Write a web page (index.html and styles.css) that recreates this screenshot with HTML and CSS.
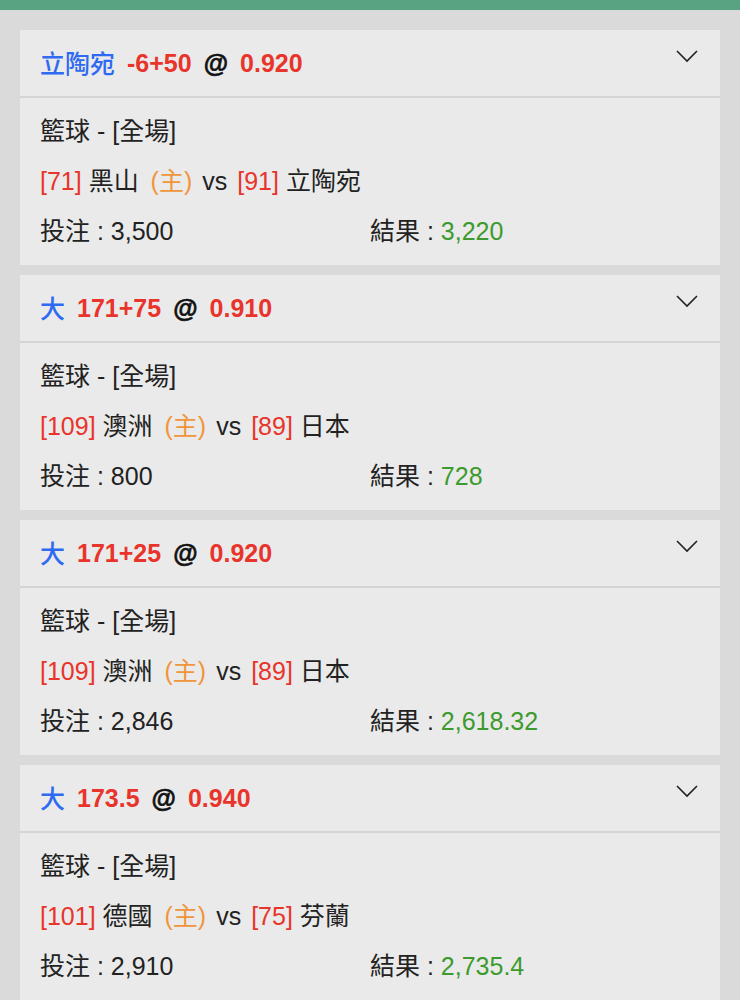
FILE: index.html
```html
<!DOCTYPE html>
<html lang="zh-Hant">
<head>
    <meta charset="UTF-8">
    <meta name="viewport" content="width=device-width, initial-scale=1.0">
    <title>投注紀錄</title>
    <link rel="stylesheet" href="styles.css">
</head>
<body>

<div class="top-bar"></div>

<div class="bet-list">

    <div class="bet-card">
        <div class="bet-head">
            <div class="bet-title">
                <span class="pick">立陶宛</span>
                <span class="line">-6+50</span>
                <span class="at">@</span>
                <span class="odds">0.920</span>
            </div>
            <svg class="chevron" width="24" height="14" viewBox="0 0 24 14"><polyline points="2,2 12,12 22,2" fill="none" stroke="#222" stroke-width="1.6"/></svg>
        </div>
        <div class="bet-body">
            <div class="row">籃球 - [全場]</div>
            <div class="row"><span class="num">[71]</span> 黑山 <span class="home">(主)</span><span class="vs">vs</span><span class="num">[91]</span> 立陶宛</div>
            <div class="row split">
                <div>投注 : 3,500</div>
                <div>結果 : <span class="win">3,220</span></div>
            </div>
        </div>
    </div>

    <div class="bet-card">
        <div class="bet-head">
            <div class="bet-title">
                <span class="pick">大</span>
                <span class="line">171+75</span>
                <span class="at">@</span>
                <span class="odds">0.910</span>
            </div>
            <svg class="chevron" width="24" height="14" viewBox="0 0 24 14"><polyline points="2,2 12,12 22,2" fill="none" stroke="#222" stroke-width="1.6"/></svg>
        </div>
        <div class="bet-body">
            <div class="row">籃球 - [全場]</div>
            <div class="row"><span class="num">[109]</span> 澳洲 <span class="home">(主)</span><span class="vs">vs</span><span class="num">[89]</span> 日本</div>
            <div class="row split">
                <div>投注 : 800</div>
                <div>結果 : <span class="win">728</span></div>
            </div>
        </div>
    </div>

    <div class="bet-card">
        <div class="bet-head">
            <div class="bet-title">
                <span class="pick">大</span>
                <span class="line">171+25</span>
                <span class="at">@</span>
                <span class="odds">0.920</span>
            </div>
            <svg class="chevron" width="24" height="14" viewBox="0 0 24 14"><polyline points="2,2 12,12 22,2" fill="none" stroke="#222" stroke-width="1.6"/></svg>
        </div>
        <div class="bet-body">
            <div class="row">籃球 - [全場]</div>
            <div class="row"><span class="num">[109]</span> 澳洲 <span class="home">(主)</span><span class="vs">vs</span><span class="num">[89]</span> 日本</div>
            <div class="row split">
                <div>投注 : 2,846</div>
                <div>結果 : <span class="win">2,618.32</span></div>
            </div>
        </div>
    </div>

    <div class="bet-card">
        <div class="bet-head">
            <div class="bet-title">
                <span class="pick">大</span>
                <span class="line">173.5</span>
                <span class="at">@</span>
                <span class="odds">0.940</span>
            </div>
            <svg class="chevron" width="24" height="14" viewBox="0 0 24 14"><polyline points="2,2 12,12 22,2" fill="none" stroke="#222" stroke-width="1.6"/></svg>
        </div>
        <div class="bet-body">
            <div class="row">籃球 - [全場]</div>
            <div class="row"><span class="num">[101]</span> 德國 <span class="home">(主)</span><span class="vs">vs</span><span class="num">[75]</span> 芬蘭</div>
            <div class="row split">
                <div>投注 : 2,910</div>
                <div>結果 : <span class="win">2,735.4</span></div>
            </div>
        </div>
    </div>

</div>

</body>
</html>
```

FILE: styles.css
```css
body {
    font-family: 'Liberation Sans', 'Noto Sans CJK TC', sans-serif;
    background-color: #dadada;
    color: #222;
    margin: 0;
    padding: 0;
}

.top-bar {
    height: 10px;
    background-color: #59a383;
}

.bet-list {
    display: flex;
    flex-direction: column;
    gap: 10px;
    padding: 20px 20px;
}

.bet-card {
    background-color: #eaeaea;
}

/* header row */
.bet-head {
    display: flex;
    justify-content: space-between;
    align-items: center;
    height: 66px;
    padding: 0 21px 0 20px;
    border-bottom: 2px solid #d4d4d4;
}

.bet-title {
    display: flex;
    align-items: center;
    gap: 12px;
    font-size: 25px;
    font-weight: bold;
}

.pick {
    color: #2f6af2;
    font-weight: 500;
    margin-top: -3px;
}

.line,
.odds {
    color: #e8342a;
}

.at {
    color: #111;
    -webkit-text-stroke: 0.6px #111;
}

.chevron {
    align-self: flex-start;
    margin-top: 19px;
}

/* body rows */
.bet-body {
    padding: 8px 20px 9px;
    font-size: 25px;
}

.row {
    line-height: 50px;
    white-space: nowrap;
}

.split {
    display: grid;
    grid-template-columns: 1fr 1fr;
}

.num {
    color: #e8342a;
}

.home {
    color: #f0953c;
    margin-left: 5px;
}

.vs {
    margin: 0 10px;
}

.win {
    color: #3c9a2e;
}
```
